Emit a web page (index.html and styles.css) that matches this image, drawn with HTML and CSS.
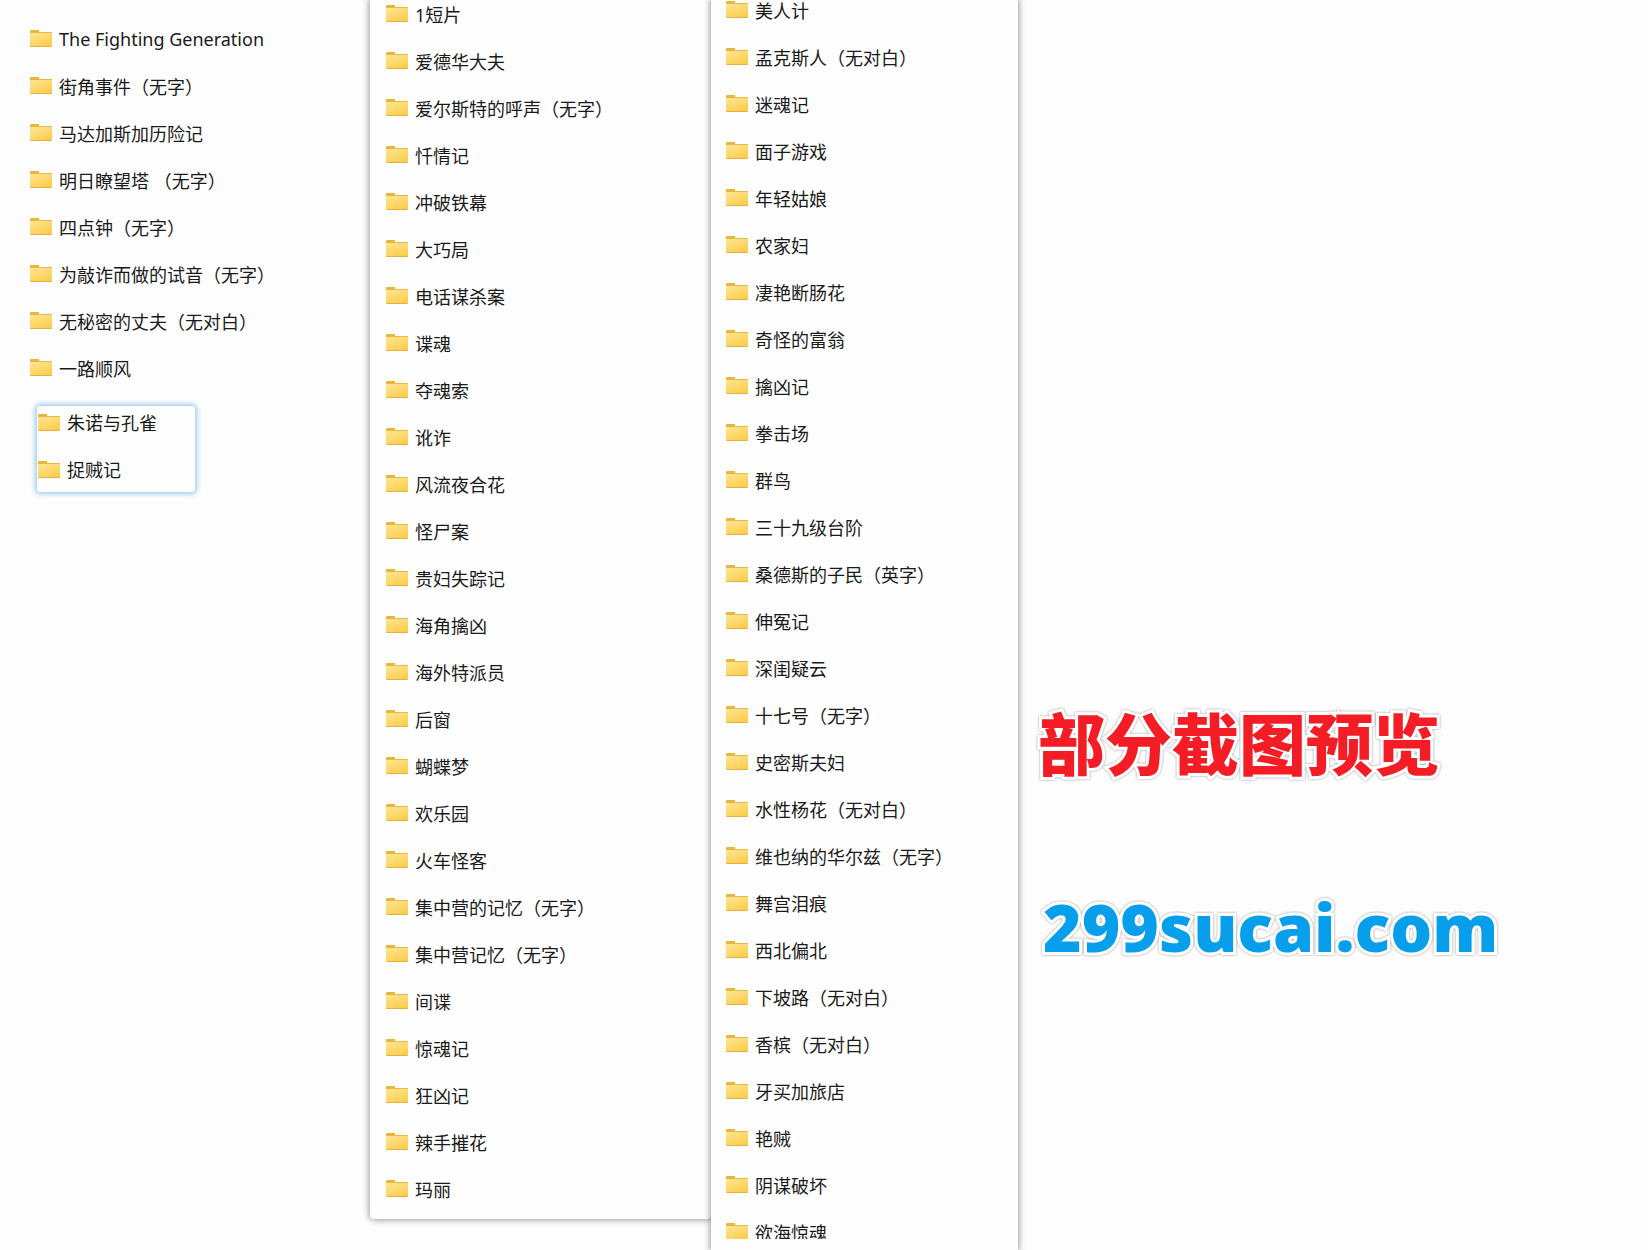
FILE: index.html
```
<!DOCTYPE html>
<html lang="zh-CN">
<head>
  <meta charset="UTF-8">
  <title>部分截图预览</title>
  <link rel="stylesheet" href="styles.css">
</head>
<body>
  <main class="container">
    <section class="coluna">
      <ul class="pastas">
        <li><a href="#">The Fighting Generation</a></li>
        <li><a href="#">街角事件（无字）</a></li>
        <li><a href="#">马达加斯加历险记</a></li>
        <li><a href="#">明日瞭望塔 （无字）</a></li>
        <li><a href="#">四点钟（无字）</a></li>
        <li><a href="#">为敲诈而做的试音（无字）</a></li>
        <li><a href="#">无秘密的丈夫（无对白）</a></li>
        <li><a href="#">一路顺风</a></li>
      </ul>
      <ul class="pastas destaque">
        <li><a href="#">朱诺与孔雀</a></li>
        <li><a href="#">捉贼记</a></li>
      </ul>
    </section>

    <section class="coluna painel">
      <ul class="pastas">
        <li><a href="#">1短片</a></li>
        <li><a href="#">爱德华大夫</a></li>
        <li><a href="#">爱尔斯特的呼声（无字）</a></li>
        <li><a href="#">忏情记</a></li>
        <li><a href="#">冲破铁幕</a></li>
        <li><a href="#">大巧局</a></li>
        <li><a href="#">电话谋杀案</a></li>
        <li><a href="#">谍魂</a></li>
        <li><a href="#">夺魂索</a></li>
        <li><a href="#">讹诈</a></li>
        <li><a href="#">风流夜合花</a></li>
        <li><a href="#">怪尸案</a></li>
        <li><a href="#">贵妇失踪记</a></li>
        <li><a href="#">海角擒凶</a></li>
        <li><a href="#">海外特派员</a></li>
        <li><a href="#">后窗</a></li>
        <li><a href="#">蝴蝶梦</a></li>
        <li><a href="#">欢乐园</a></li>
        <li><a href="#">火车怪客</a></li>
        <li><a href="#">集中营的记忆（无字）</a></li>
        <li><a href="#">集中营记忆（无字）</a></li>
        <li><a href="#">间谍</a></li>
        <li><a href="#">惊魂记</a></li>
        <li><a href="#">狂凶记</a></li>
        <li><a href="#">辣手摧花</a></li>
        <li><a href="#">玛丽</a></li>
      </ul>
    </section>

    <section class="coluna painel painel-alto">
      <ul class="pastas">
        <li><a href="#">美人计</a></li>
        <li><a href="#">孟克斯人（无对白）</a></li>
        <li><a href="#">迷魂记</a></li>
        <li><a href="#">面子游戏</a></li>
        <li><a href="#">年轻姑娘</a></li>
        <li><a href="#">农家妇</a></li>
        <li><a href="#">凄艳断肠花</a></li>
        <li><a href="#">奇怪的富翁</a></li>
        <li><a href="#">擒凶记</a></li>
        <li><a href="#">拳击场</a></li>
        <li><a href="#">群鸟</a></li>
        <li><a href="#">三十九级台阶</a></li>
        <li><a href="#">桑德斯的子民（英字）</a></li>
        <li><a href="#">伸冤记</a></li>
        <li><a href="#">深闺疑云</a></li>
        <li><a href="#">十七号（无字）</a></li>
        <li><a href="#">史密斯夫妇</a></li>
        <li><a href="#">水性杨花（无对白）</a></li>
        <li><a href="#">维也纳的华尔兹（无字）</a></li>
        <li><a href="#">舞宫泪痕</a></li>
        <li><a href="#">西北偏北</a></li>
        <li><a href="#">下坡路（无对白）</a></li>
        <li><a href="#">香槟（无对白）</a></li>
        <li><a href="#">牙买加旅店</a></li>
        <li><a href="#">艳贼</a></li>
        <li><a href="#">阴谋破坏</a></li>
        <li><a href="#">欲海惊魂</a></li>
      </ul>
    </section>

    <section class="aviso">
      <h1>部分截图预览</h1>
      <p class="site">299sucai.com</p>
    </section>
  </main>
</body>
</html>
```
FILE: styles.css
```
* {
  box-sizing: border-box;
}

body {
  margin: 0;
  background: #fdfdfd;
  color: #1a1a1a;
  font-family: "Noto Sans", "Noto Sans CJK SC", sans-serif;
  font-size: 18px;
}

.container {
  display: grid;
  grid-template-columns: 370fr 341fr 307fr 630fr;
  align-items: start;
  height: 100vh;
  overflow: hidden;
}

.coluna {
  padding: 15px 16px 0 30px;
}

.painel {
  padding: 0 16px 7px;
  background: #fefefe;
  border-radius: 0 0 4px 4px;
  box-shadow: 0 0 6px 1px rgba(0, 0, 0, 0.4);
}

.painel .pastas {
  margin-top: -10px;
}

.painel-alto {
  height: 100vh;
  padding: 0 15px 11px;
  border-radius: 0;
}

/* a ultima pasta fica cortada no fim da janela */
.painel-alto .pastas {
  height: 100%;
  margin-top: 0;
  overflow: hidden;
}

.painel-alto .pastas li:first-child {
  margin-top: -14px;
}

.pastas {
  margin: 0;
  padding: 0;
  list-style: none;
}

.pastas a {
  display: flex;
  align-items: center;
  gap: 7px;
  height: 47px;
  color: inherit;
  text-decoration: none;
  white-space: nowrap;
}

/* icone da pasta: aba em cima, corpo amarelo embaixo */
.pastas a::before {
  content: "";
  flex: none;
  width: 22px;
  height: 17px;
  border-radius: 1px;
  background:
    linear-gradient(#e9b63c, #e9b63c) 0 0 / 9px 3px no-repeat,
    linear-gradient(#e8b94a, #e8b94a) 0 2px / 22px 1px no-repeat,
    linear-gradient(#e3b048, #e3b048) 0 16px / 22px 1px no-repeat,
    linear-gradient(160deg, #ffe594, #fbcb45) 0 3px / 22px 13px no-repeat;
}

.destaque {
  display: grid;
  gap: 15px;
  width: 158px;
  margin: 15px 0 0 7px;
  padding: 0 1px 7px;
  background: #fefefe;
  border-radius: 3px;
  box-shadow: 0 0 5px 2px #9ccbee;
}

.destaque a {
  height: 32px;
}

.aviso {
  padding: 691px 0 0 20px;
  font-weight: 900;
  white-space: nowrap;
}

.aviso h1,
.site {
  margin: 0;
  line-height: 100px;
  paint-order: stroke fill;
  -webkit-text-stroke: 6px #fff;
  filter: drop-shadow(0 0 1px #999);
}

.aviso h1 {
  color: #f51d25;
  font-family: "Noto Sans CJK SC", sans-serif;
  font-size: 67px;
  font-weight: 900;
}

.site {
  margin: 85px 0 0 5px;
  color: #079fec;
  font-size: 66px;
}
```
